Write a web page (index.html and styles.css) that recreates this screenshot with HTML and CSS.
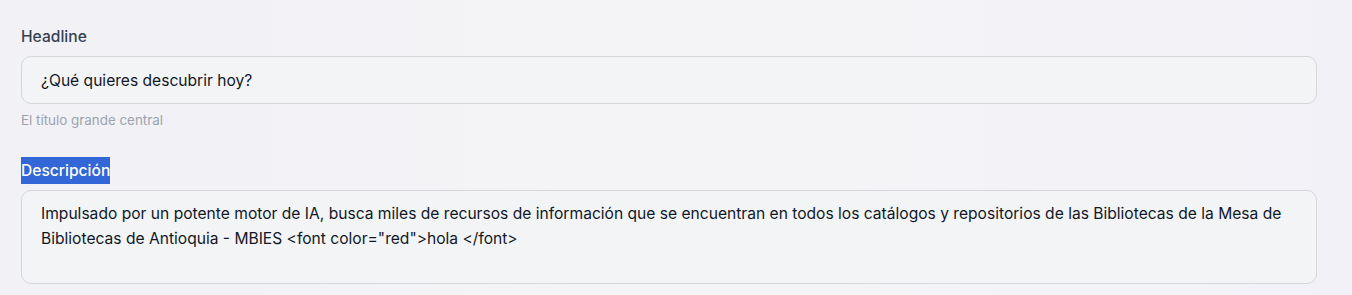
FILE: index.html
```html
<!DOCTYPE html>
<html lang="es">
<head>
  <meta charset="UTF-8" />
  <title>Editor</title>
  <link rel="stylesheet" href="styles.css">
</head>
<body>
  <div class="form">
    <div class="field">
      <label class="label">Headline</label>
      <input class="input" type="text" value="¿Qué quieres descubrir hoy?">
      <div class="hint">El título grande central</div>
    </div>

    <div class="field">
      <label class="label"><span class="selected">Descripción</span></label>
      <textarea class="input area">Impulsado por un potente motor de IA, busca miles de recursos de información que se encuentran en todos los catálogos y repositorios de las Bibliotecas de la Mesa de Bibliotecas de Antioquia - MBIES &lt;font color="red"&gt;hola &lt;/font&gt;</textarea>
    </div>
  </div>
</body>
</html>
```

FILE: styles.css
```css
body {
  margin: 0;
  padding: 0;
  font-family: Inter, 'Noto Sans', sans-serif;
  background: linear-gradient(to right, #f1f1f6, #f4f4f6 50%, #f2f1f7);
  color: #111827;
  height: 295px;
  overflow: hidden;
}

.form {
  width: 1296px;
  padding: 26px 0 0 21px;
}

.field {
  display: flex;
  flex-direction: column;
}

.label {
  font-size: 15.6px;
  font-weight: 500;
  color: #374151;
  line-height: 22px;
  margin-bottom: 8px;
}

.selected {
  background: #3366d6;
  color: #fff;
  padding: 4px 0;
}

.input {
  box-sizing: border-box;
  width: 100%;
  height: 48px;
  padding: 0 19px;
  border: 1px solid #d4d6dc;
  border-radius: 10px;
  background: #f3f4f6;
  font-family: inherit;
  font-size: 15.6px;
  color: #111827;
  outline: none;
  margin: 0;
}

.area {
  height: 94px;
  padding: 10px 19px;
  line-height: 25px;
  resize: none;
  overflow: hidden;
  display: block;
}

.hint {
  font-size: 13.4px;
  color: #9ca3af;
  margin-top: 7px;
  line-height: 18px;
  margin-bottom: 31px;
}
```
